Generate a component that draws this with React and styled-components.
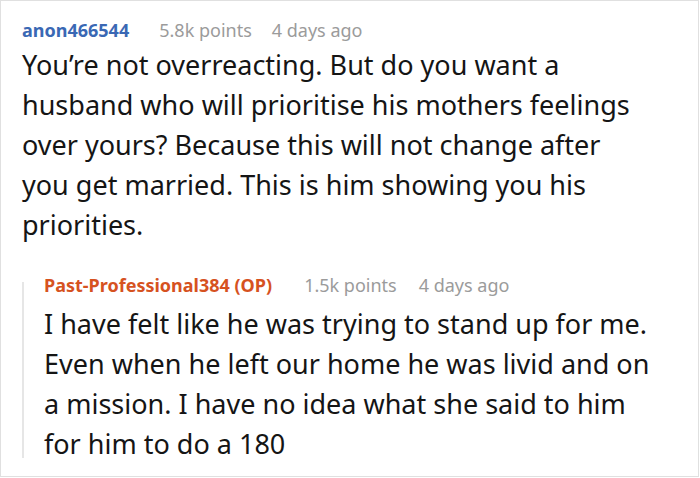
import React from "react";
import styled, { createGlobalStyle } from "styled-components";

const Global = createGlobalStyle`
  html, body { margin: 0; padding: 0; background: #fff; }
  body { font-family: "Noto Sans", "Open Sans", sans-serif; }
`;

const Card = styled.div`
  box-sizing: border-box;
  width: 699px;
  height: 477px;
  border: 1px solid #e0e0e0;
  padding: 17px 47px 0 21px;
  overflow: hidden;
`;

const Comment = styled.div`
  display: flex;
  flex-direction: column;
`;

const Header = styled.div`
  display: flex;
  align-items: baseline;
  height: 24px;
  line-height: 24px;
  font-size: 18px;
  white-space: nowrap;
`;

const Author = styled.span`
  font-weight: 700;
  color: ${(p) => p.$color};
`;

const Meta = styled.span`
  color: #9b9b9b;
  margin-left: ${(p) => p.$gap}px;
`;

const Body = styled.p`
  margin: ${(p) => p.$top}px 0 0;
  font-size: 27px;
  line-height: 40px;
  color: #151515;
`;

const Replies = styled.div`
  position: relative;
  margin-top: 28px;
  padding-left: 22px;

  &::before {
    content: "";
    position: absolute;
    left: 0;
    top: 9px;
    bottom: 6px;
    width: 2px;
    background: #e6e6e6;
  }
`;

export default function App() {
  return (
    <>
      <Global />
      <Card>
        <Comment>
          <Header>
            <Author $color="#3a68b4">anon466544</Author>
            <Meta $gap={30}>5.8k points</Meta>
            <Meta $gap={20}>4 days ago</Meta>
          </Header>
          <Body $top={3}>
            You’re not overreacting. But do you want a husband who will prioritise his mothers feelings over
            yours? Because this will not change after you get married. This is him showing you his priorities.
          </Body>
          <Replies>
            <Comment>
              <Header>
                <Author $color="#d6521f">Past-Professional384 (OP)</Author>
                <Meta $gap={32}>1.5k points</Meta>
                <Meta $gap={22}>4 days ago</Meta>
              </Header>
              <Body $top={7}>
                I have felt like he was trying to stand up for me. Even when he left our home he was livid and on a
                mission. I have no idea what she said to him for him to do a 180
              </Body>
            </Comment>
          </Replies>
        </Comment>
      </Card>
    </>
  );
}
